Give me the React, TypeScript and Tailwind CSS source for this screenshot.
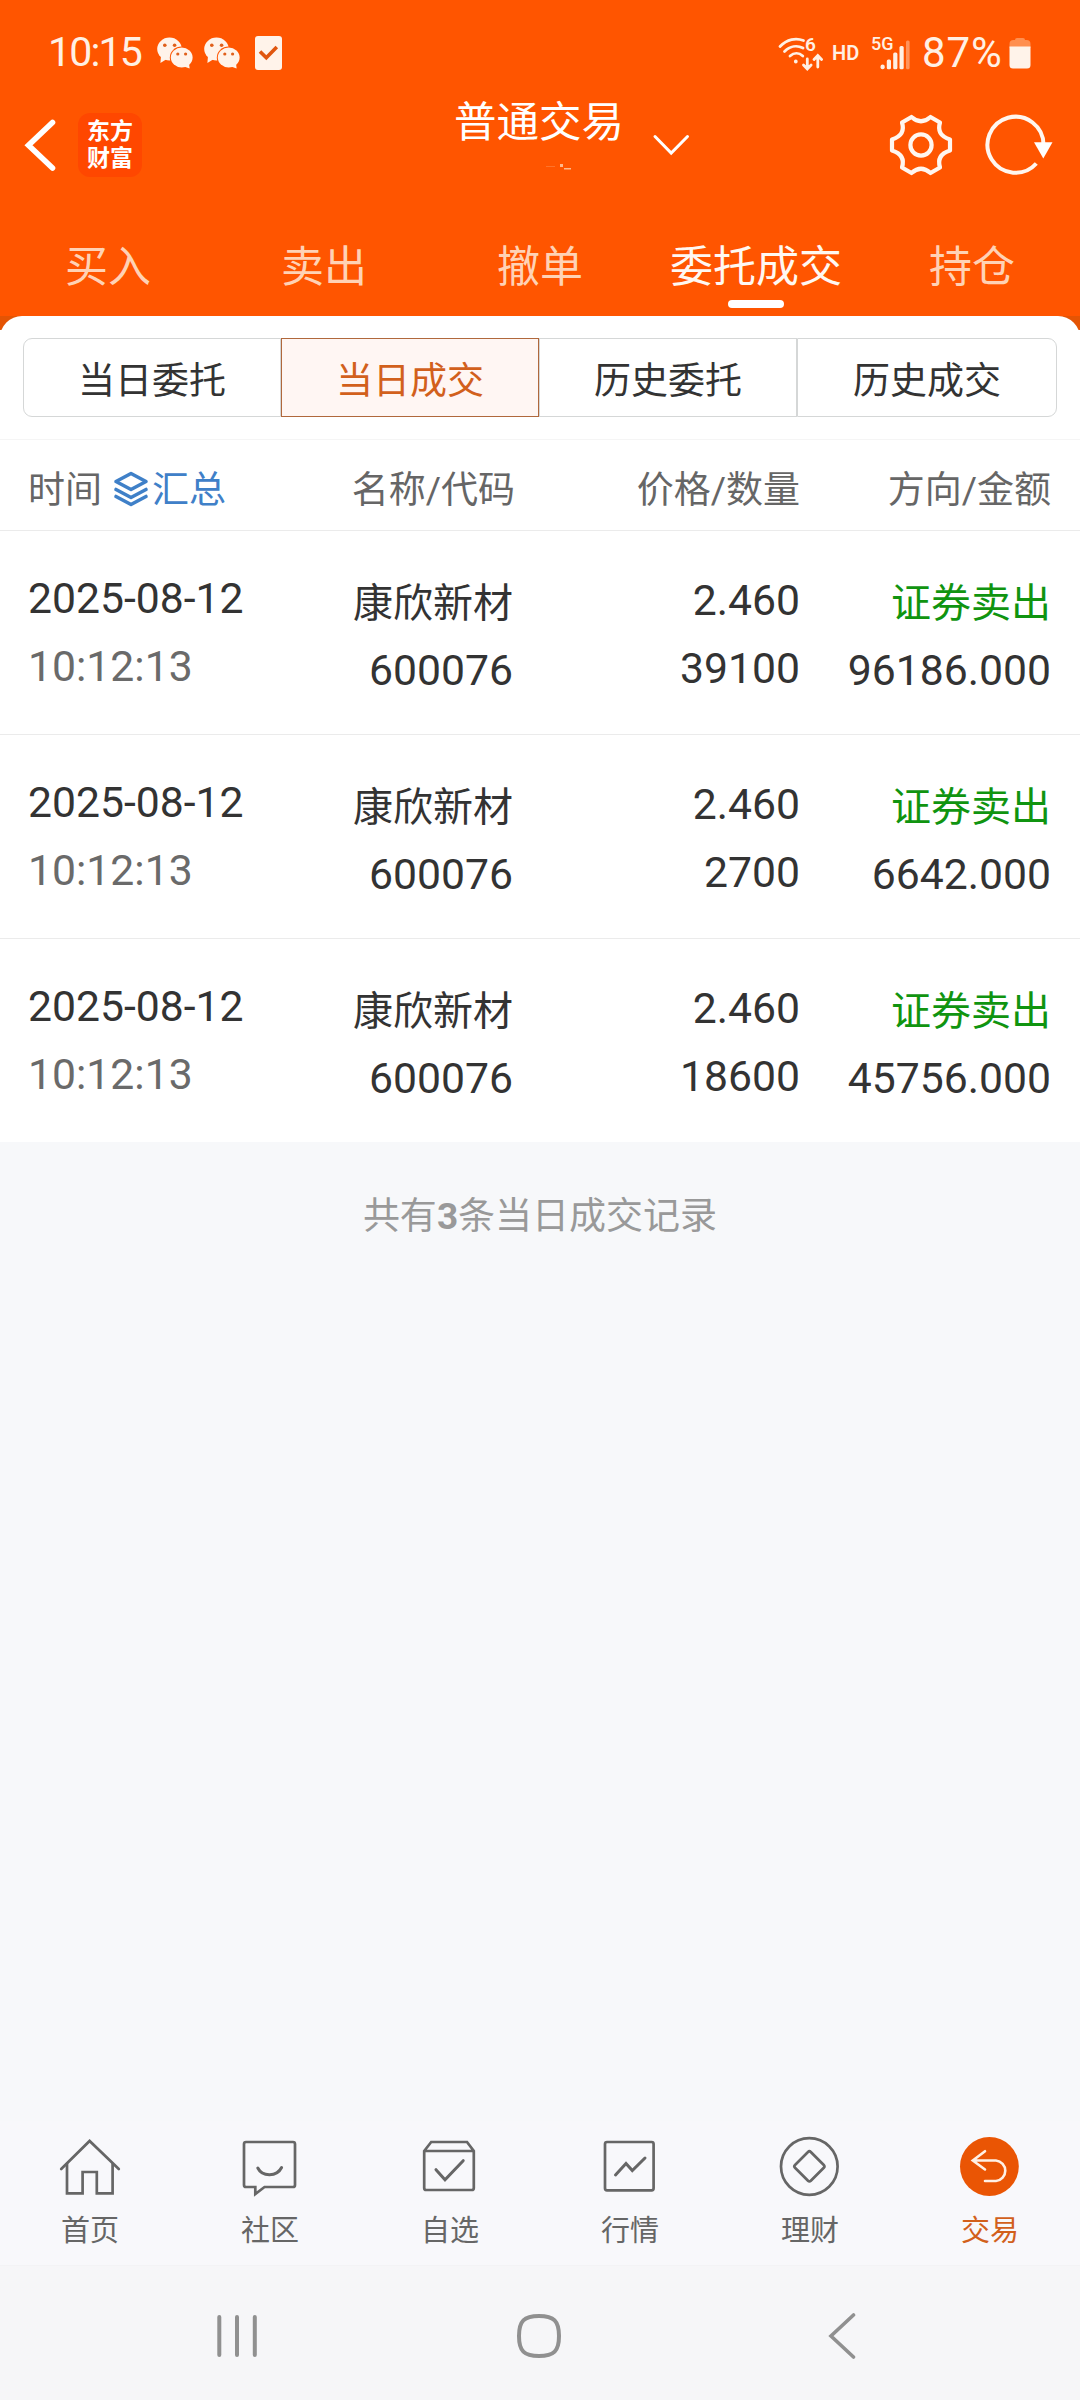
import { useState } from "react";

const tabs = ["买入", "卖出", "撤单", "委托成交", "持仓"];
const segments = ["当日委托", "当日成交", "历史委托", "历史成交"];

const trades = [
  { id: 1, date: "2025-08-12", time: "10:12:13", name: "康欣新材", code: "600076", price: "2.460", qty: "39100", side: "证券卖出", amount: "96186.000" },
  { id: 2, date: "2025-08-12", time: "10:12:13", name: "康欣新材", code: "600076", price: "2.460", qty: "2700", side: "证券卖出", amount: "6642.000" },
  { id: 3, date: "2025-08-12", time: "10:12:13", name: "康欣新材", code: "600076", price: "2.460", qty: "18600", side: "证券卖出", amount: "45756.000" },
];

const WechatIcon = () => (
  <svg width="36" height="32" viewBox="0 0 36 32" fill="#fff3ea">
    <ellipse cx="12.5" cy="12" rx="12.3" ry="11.4" />
    <path d="M4 19l-.6 7 6.5-4z" />
    <ellipse cx="24.7" cy="20.5" rx="11.9" ry="11" fill="#ff5500" />
    <ellipse cx="24.7" cy="20.5" rx="10.9" ry="10" />
    <path d="M27 29.5l5.6 2-.6-5z" />
    <g fill="#e0601c">
      <circle cx="7.8" cy="8.2" r="1.8" />
      <circle cx="17.6" cy="8.2" r="1.8" />
      <circle cx="20.8" cy="17" r="1.6" />
      <circle cx="28.6" cy="17" r="1.6" />
    </g>
  </svg>
);

const StatusBar = () => (
  <div className="flex h-[105px] items-center justify-between pl-[48px] pr-[49px] text-[#fff0e4]">
    <div className="flex items-center">
      <span className="w-[109px] text-[41px] tracking-[-1.8px]">10:15</span>
      <WechatIcon />
      <span className="w-[11px]" />
      <WechatIcon />
      <svg className="ml-[15px]" width="27" height="34" viewBox="0 0 27 34">
        <rect width="27" height="34" rx="3" fill="#fff3ea" />
        <path d="M5 15.5l6.3 6.3L21.8 11" fill="none" stroke="#e0560f" strokeWidth="3.6" />
      </svg>
    </div>
    <div className="flex items-center">
      {/* wifi 6 with traffic arrows */}
      <div className="relative">
        <svg width="50" height="40" viewBox="0 0 50 40" fill="none" stroke="#fff0e4" strokeWidth="2.8" strokeLinecap="round">
          <path d="M5 13.5C12 6 21 4.500 28.500 7.500" />
          <path d="M9.500 18.500C15 13 22 12 28 15" />
          <path d="M15 23c4-3.500 9-3.500 12.800 0" />
          <circle cx="20.800" cy="28.500" r="1" fill="#fff0e4" strokeWidth="1.800" />
          <path d="M32.300 26v9M28.500 32l3.800 4 3.800-4M42.800 34V23M39 26.500l3.800-4 3.800 4" />
        </svg>
        <span className="absolute top-0 left-[30px] text-[19px] leading-[24px] font-semibold">6</span>
      </div>
      <span className="ml-[7px] w-[39px] text-[20px] font-semibold">HD</span>
      <div className="relative">
        <svg width="40" height="36" viewBox="0 0 40 36" fill="#fff0e4">
          <rect x="9.500" y="29.500" width="4.200" height="4.800" rx="2" />
          <rect x="15.800" y="24.500" width="4.200" height="9.800" rx="1.500" />
          <rect x="22.200" y="17.500" width="4.200" height="16.800" rx="1.500" />
          <rect x="28.500" y="11" width="4.200" height="23.300" rx="1.500" />
          <rect x="35" y="5.500" width="3.600" height="28.800" rx="1.500" opacity="0.4" />
        </svg>
        <span className="absolute -top-[2px] left-0 text-[18px] leading-[22px] font-medium">5G</span>
      </div>
      <span className="ml-[11px] w-[87px] text-[42px] tracking-[0.9px]">87%</span>
      <svg width="22" height="32" viewBox="0 0 22 32">
        <path d="M6 3q0-2 2-2h6q2 0 2 2h1.500q4 0 4 4v4H.5V7q0-4 4-4z" fill="#ff8f50" />
        <path d="M.5 9.500h21V28q0 3.500-3.500 3.500H4Q.5 31.500.5 28z" fill="#fff3ea" />
      </svg>
    </div>
  </div>
);

const TitleBar = () => (
  <div className="grid h-20 grid-cols-[440px_1fr_220px] text-white">
    <div className="flex items-center pl-6">
      <svg width="34" height="54" viewBox="0 0 34 54" fill="none" stroke="#fff" strokeWidth="5.6" strokeLinecap="round">
        <path d="M28.500 4.500L4.500 27.300l24 22.700" />
      </svg>
      <div className="ml-5 flex h-16 w-16 flex-col items-center justify-center rounded-[12px] bg-[#ff4700] text-[23px] leading-[27px] font-bold">
        <span>东方</span>
        <span>财富</span>
      </div>
    </div>
    <div className="flex pl-[14px]">
      <div className="w-[172px] whitespace-nowrap text-[42.5px] leading-[36px]">
        普通交易
        <svg className="ml-[90px] mt-[21px]" width="32" height="10" viewBox="0 0 32 10" fill="#ffb98c">
          <rect x="16" y="2" width="3" height="3" />
          <rect x="20" y="6" width="7" height="1.500" />
          <rect x="2" y="4" width="9" height="1" opacity="0.3" />
        </svg>
      </div>
      <svg className="ml-[26px] mt-[27px]" width="38" height="24" viewBox="0 0 38 24" fill="none" stroke="#fff" strokeWidth="3" strokeLinecap="round">
        <path d="M3 4.500l16.200 16.500L35.500 4.500" />
      </svg>
    </div>
    <div className="flex items-center justify-end gap-[30px] pr-[26px]">
      <svg width="66" height="66" viewBox="0 0 66 66" fill="none" stroke="#fff6ef" strokeWidth="4.2" strokeLinejoin="round">
        <path d="M23.500 5Q33 13.500 42.500 5L52 10.500C49.500 18.500 52.500 24.500 62 27.500V38.500C52.500 41.500 49.500 47.500 52 55.500L42.500 61Q33 52.500 23.500 61L14 55.500C16.500 47.500 13.500 41.500 4 38.500V27.500C13.500 24.500 16.500 18.500 14 10.500Z" />
        <circle cx="33" cy="33" r="10.600" />
      </svg>
      <svg width="70" height="64" viewBox="0 0 70 64">
        <path d="M59.500 32A28 28 0 1 0 52.300 50.500" fill="none" stroke="#fff6ef" strokeWidth="4" />
        <path d="M50 29.300h18.500L59.300 45.500z" fill="#fff" />
      </svg>
    </div>
  </div>
);

const LayersIcon = () => (
  <svg className="-mt-[3px] ml-[11px]" width="36" height="36" viewBox="0 0 36 36" fill="none" stroke="#3f80c8" strokeWidth="3.6" strokeLinecap="round" strokeLinejoin="round">
    <path d="M18 2.500L33 10.500 18 18.500 3 10.500z" />
    <path d="M3 18.500l15 8 15-8M3 25.500l15 8 15-8" />
  </svg>
);

const navItems = [
  {
    label: "首页",
    icon: (
      <>
        <path d="M1.200 33L29.600 5 58.800 33" />
        <path d="M7 28v29.300h15.600V36h14.200v21.300h15.800V28" />
      </>
    ),
  },
  {
    label: "社区",
    icon: (
      <>
        <path d="M6 6h47q2 0 2 2v41q0 2-2 2H24.500l-9.200 7V51H6q-2 0-2-2V8q0-2 2-2z" />
        <path d="M17.800 32c4.500 9 19 9 23.800-.5" strokeWidth="3" />
      </>
    ),
  },
  {
    label: "自选",
    icon: (
      <>
        <path d="M4.200 15l7-9H47l6.800 9v37q0 2-2 2H6.200q-2 0-2-2zM4.200 15h49.600" />
        <path d="M16 33.700l9 10 18.200-19" strokeWidth="3" />
      </>
    ),
  },
  {
    label: "行情",
    icon: (
      <>
        <rect x="5" y="6" width="48.600" height="48.300" rx="2" />
        <path d="M15.500 39L26 27.500l6.300 7L45 22" strokeWidth="3" />
      </>
    ),
  },
  {
    label: "理财",
    icon: (
      <>
        <circle cx="29.300" cy="30.500" r="28.300" />
        <path d="M28 16q1.400-1.400 2.800 0l13 13q1.400 1.400 0 2.800l-13 13q-1.400 1.400-2.800 0l-13-13q-1.400-1.400 0-2.800z" />
      </>
    ),
  },
  {
    label: "交易",
    active: true,
    icon: (
      <>
        <circle cx="29.400" cy="30.500" r="29.400" fill="#ea5504" stroke="none" />
        <path d="M25 15.200L12.800 24.500 25 33.500M13 24.500h23a10.300 10.300 0 0 1 0 20.500H25" stroke="#fff0e4" strokeWidth="2.600" />
      </>
    ),
  },
];

const App = () => {
  const [activeTab, setActiveTab] = useState("委托成交");
  const [activeSegment, setActiveSegment] = useState("当日成交");

  return (
    <div className="flex h-[2400px] w-[1080px] flex-col bg-[#f7f8fa] font-[Roboto,'Noto_Sans_CJK_SC',sans-serif] text-[#333]">
      <header className="h-[316px] bg-[#ff5500]">
        <StatusBar />
        <TitleBar />
        <div className="grid grid-cols-5 pt-[52px]">
          {tabs.map((tab) => (
            <button
              key={tab}
              onClick={() => setActiveTab(tab)}
              className={`flex flex-col items-center text-[43px] leading-[60px] ${tab === activeTab ? "text-[#fff8f2]" : "text-[#ffd2b5]"}`}
            >
              {tab}
              {tab === activeTab && <span className="mt-[3px] h-2 w-14 rounded-full bg-white" />}
            </button>
          ))}
        </div>
      </header>

      {/* rounded top edge of the white sheet */}
      <div className="h-[14px] overflow-hidden bg-[#e45404]">
        <div className="h-10 rounded-t-[22px] bg-white" />
      </div>

      <div className="bg-white">
        <div className="px-[23px] pt-2 pb-[22px]">
          <div className="grid h-[79px] grid-cols-[258px_258px_258px_260px] text-[37px] leading-[40px]">
            {segments.map((segment) => (
              <button
                key={segment}
                onClick={() => setActiveSegment(segment)}
                className={`border pt-[9px] first:rounded-l-[9px] last:rounded-r-[9px] ${
                  segment === activeSegment ? "border-[#b0683c] bg-[#fff6f3] text-[#d2601c]" : "border-[#d5d7d7]"
                }`}
              >
                {segment}
              </button>
            ))}
          </div>
        </div>

        <div className="grid h-[91px] grid-cols-[220px_265px_287px_251px] items-center border-t border-[#f5f5f5] pt-[11px] pl-7 text-right text-[37px] text-[#666]">
          <div className="flex items-center whitespace-nowrap">
            时间
            <LayersIcon />
            <span className="ml-[3px] text-[#3f80c8]">汇总</span>
          </div>
          <div className="-mr-[2px]">名称/代码</div>
          <div>价格/数量</div>
          <div>方向/金额</div>
        </div>

        {trades.map((trade) => (
          <div
            key={trade.id}
            className="grid h-[204px] grid-cols-[220px_265px_287px_251px] border-t border-[#ebebeb] pl-7 text-right text-[42.700px]"
          >
            <div className="pt-[33px] text-left leading-[68px] whitespace-nowrap">
              <p>{trade.date}</p>
              <p className="text-[#6a6a6a]">{trade.time}</p>
            </div>
            <div className="pt-[39px] leading-[67px]">
              <p className="text-[40px]">{trade.name}</p>
              <p>{trade.code}</p>
            </div>
            <div className="pt-[35px] leading-[68px]">
              <p>{trade.price}</p>
              <p>{trade.qty}</p>
            </div>
            <div className="pt-[39px] leading-[67px]">
              <p className="text-[40px] text-[#109410]">{trade.side}</p>
              <p>{trade.amount}</p>
            </div>
          </div>
        ))}
      </div>

      <p className="pt-[55px] text-center text-[37px] leading-[40px] text-[#999]">
        共有<b>3</b>条当日成交记录
      </p>

      <nav className="mt-auto grid h-[144px] grid-cols-6 bg-[#f8f8fb] pt-[15px]">
        {navItems.map((item) => (
          <div key={item.label} className={`flex flex-col items-center text-[29px] leading-[40px] ${item.active ? "text-[#d2601c]" : "text-[#666]"}`}>
            <svg width="60" height="60" viewBox="0 0 60 60" fill="none" stroke="#666" strokeWidth="2.7" strokeLinecap="round" className="overflow-visible">
              {item.icon}
            </svg>
            <span className="mt-[15px]">{item.label}</span>
          </div>
        ))}
      </nav>

      {/* android navigation */}
      <div className="flex h-[135px] items-center border-t border-[#f3f3f5] bg-[#f6f6f8] pt-[5px] pl-[217px]">
        <svg width="40" height="44" viewBox="0 0 40 44" stroke="#909090" strokeWidth="4" strokeLinecap="round">
          <path d="M2.300 3v38M20 3v38M37.800 3v38" />
        </svg>
        <svg className="ml-[259px]" width="46" height="46" viewBox="0 0 46 46" fill="none" stroke="#909090" strokeWidth="4">
          <path d="M23 3C38 3 43 8 43 23S38 43 23 43 3 38 3 23 8 3 23 3z" />
        </svg>
        <svg className="ml-[266px]" width="28" height="46" viewBox="0 0 28 46" fill="none" stroke="#909090" strokeWidth="3.600" strokeLinecap="round">
          <path d="M25.500 2L3 23l22.500 21" />
        </svg>
      </div>
    </div>
  );
};

export default App;
